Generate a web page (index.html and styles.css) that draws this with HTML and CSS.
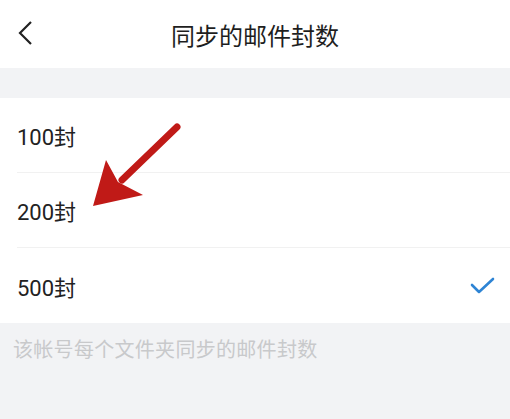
FILE: index.html
```html
<!DOCTYPE html>
<html lang="zh-CN">
<head>
    <meta charset="UTF-8">
    <meta name="viewport" content="width=device-width, initial-scale=1.0">
    <title>同步的邮件封数</title>
    <link rel="stylesheet" href="styles.css">
</head>
<body>
    <div class="page">
        <header class="topbar">
            <svg class="back" width="16" height="26" viewBox="0 0 16 26">
                <path d="M14 2 L3 13 L14 24" fill="none" stroke="#222" stroke-width="2.2"/>
            </svg>
            <h1>同步的邮件封数</h1>
        </header>

        <div class="spacer"></div>

        <ul class="options">
            <li class="option">100封</li>
            <li class="option">200封</li>
            <li class="option selected">
                500封
                <svg class="check" width="26" height="20" viewBox="0 0 26 20">
                    <path d="M2 9 L9 16 L23 3" fill="none" stroke="#2e84d4" stroke-width="2.6" stroke-linecap="round" stroke-linejoin="round"/>
                </svg>
            </li>
        </ul>

        <p class="hint">该帐号每个文件夹同步的邮件封数</p>

        <!-- red annotation arrow drawn over the list -->
        <svg class="arrow" width="510" height="419" viewBox="0 0 510 419">
            <line x1="177" y1="127" x2="122" y2="180" stroke="#c01a17" stroke-width="7" stroke-linecap="round"/>
            <path d="M93 206 L106 160 L118 182 L143 195 Z" fill="#c01a17"/>
        </svg>
    </div>
</body>
</html>
```

FILE: styles.css
```css
* {
    box-sizing: border-box;
}

body {
    margin: 0;
    font-family: Roboto, "Noto Sans CJK SC", sans-serif;
    color: #222;
    background: #f2f3f5;
}

.page {
    position: relative;
    width: 510px;
    height: 419px;
    overflow: hidden;
    background: #f2f3f5;
}

.topbar {
    position: relative;
    height: 68px;
    background: #fff;
    display: flex;
    align-items: center;
    justify-content: center;
}

.topbar h1 {
    margin: 0;
    font-size: 24px;
    font-weight: 400;
    font-family: "Noto Sans CJK SC", sans-serif;
    color: #1e1e1e;
}

.back {
    position: absolute;
    left: 17px;
    top: 20px;
}

.spacer {
    height: 30px;
}

.options {
    list-style: none;
    margin: 0;
    padding: 0;
    background: #fff;
}

.option {
    height: 75px;
    margin-left: 17px;
    padding-right: 14px;
    display: flex;
    align-items: center;
    justify-content: space-between;
    font-size: 22px;
    border-bottom: 1px solid #f1f1f1;
}

.option:last-child {
    border-bottom: none;
    padding-top: 1px;
}

.hint {
    margin: 0;
    padding: 13px 13px 0;
    font-size: 20px;
    line-height: 26px;
    letter-spacing: 0.3px;
    font-family: "Noto Sans CJK SC", sans-serif;
    color: #c8c9cb;
}

.arrow {
    position: absolute;
    left: 0;
    top: 0;
}
```
